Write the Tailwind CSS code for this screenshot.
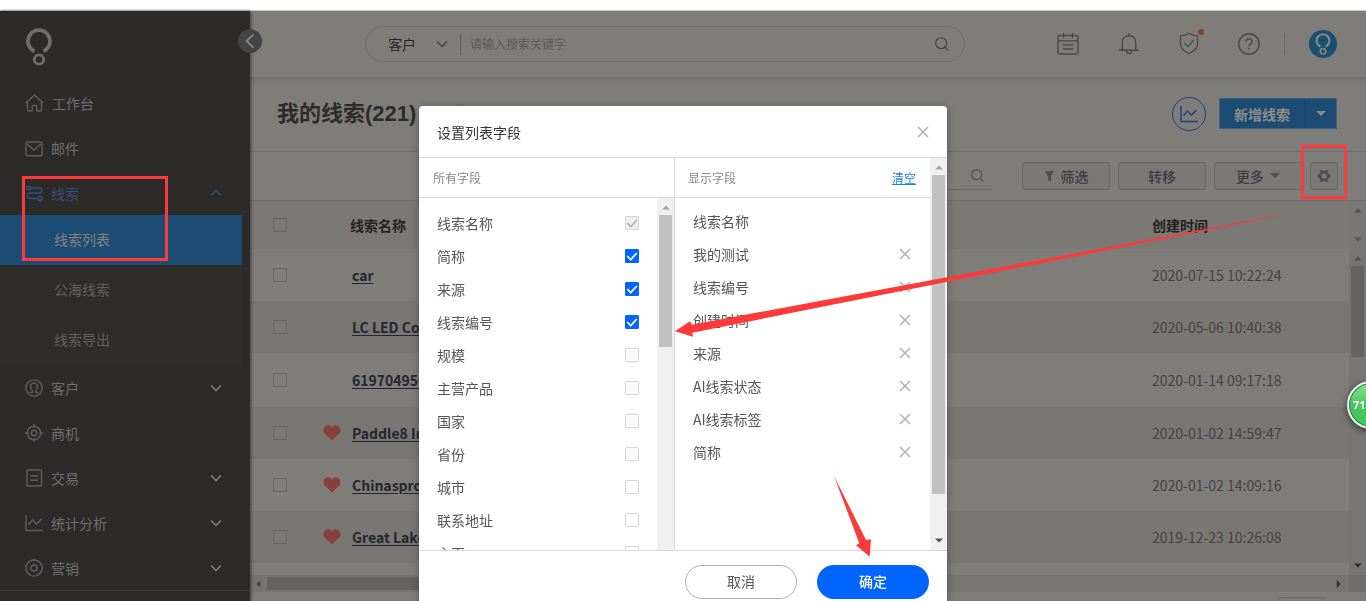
<!DOCTYPE html>
<html lang="zh-CN">
<head>
    <meta charset="UTF-8">
    <meta name="viewport" content="width=device-width, initial-scale=1.0">
    <title>我的线索</title>
    <script src="https://cdn.jsdelivr.net/npm/@tailwindcss/browser@4"></script>
    <style>
        body {
            font-family: 'Noto Sans CJK SC', sans-serif;
        }
    </style>
</head>
<body class="bg-[#7f7d7a] text-sm">

    <!-- Shared icons -->
    <svg class="hidden">
        <symbol id="chevron" viewBox="0 0 12 12"><path d="M1 3.500 6 8.500l5-5" fill="none" stroke="currentColor" stroke-width="1.500"/></symbol>
        <symbol id="caret" viewBox="0 0 10 6"><path d="M0 0h10L5 5z" fill="currentColor"/></symbol>
        <symbol id="search" viewBox="0 0 16 16"><g fill="none" stroke="currentColor" stroke-width="1.500"><circle cx="7" cy="7" r="6.200"/><path d="m11.500 11.500 4 4"/></g></symbol>
        <symbol id="close" viewBox="0 0 12 12"><path d="m1 1 10 10M11 1 1 11" fill="none" stroke="currentColor" stroke-width="1.600"/></symbol>
        <symbol id="heart" viewBox="0 0 18 16"><path d="M9 15.500 1.800 8.600C-.2 6.500.2 2.900 2.400 1.300 4.600-.3 7.500.2 9 2.500c1.500-2.300 4.400-2.800 6.600-1.200 2.200 1.600 2.600 5.200.6 7.300z" fill="currentColor"/></symbol>
        <symbol id="chart" viewBox="0 0 18 18"><g fill="none" stroke="currentColor" stroke-width="1.400"><path d="M1 1v15.500h17"/><path d="m3.500 10.500 4-4.500 4 4L16.500 5"/></g></symbol>
        <symbol id="logo" viewBox="0 0 26 38"><g fill="none" stroke="currentColor"><path d="M8.500 23.200A11 11 0 1 1 17.500 23.200" stroke-width="3.800"/><circle cx="13" cy="31.500" r="4.700" stroke-width="2.800"/></g></symbol>
    </svg>

    <div class="h-screen flex flex-col overflow-hidden">
        <div class="h-[11px] shrink-0 bg-white border-b border-[#c9cbcb]"></div>

        <div class="flex flex-1 min-h-0">
            <!-- Sidebar -->
            <aside class="relative w-[250px] shrink-0 bg-[#2d2b29] text-[#706e6c] shadow-[1px_0_3px_rgba(0,0,0,0.5)] z-10">
                <div class="h-[69px] pl-[26px] pt-[17px]">
                    <svg class="w-[26px] h-[38px] text-[#706e6c]"><use href="#logo"/></svg>
                </div>
                <button aria-label="收起" class="absolute top-[18px] -right-3 size-6 rounded-full bg-[#424543] text-[#85837f] flex items-center justify-center">
                    <svg class="size-4 rotate-90"><use href="#chevron"/></svg>
                </button>
                <nav>
                    <a href="#" class="flex items-center gap-2 h-[45px] pl-[25px]">
                        <svg class="size-[19px] text-[#5d5e61]" viewBox="0 0 19 19" fill="none" stroke="currentColor" stroke-width="1.400"><path d="M.8 10 9.500 2.200 18.200 10"/><path d="M2.500 8.800v8q0 1.200 1.200 1.200h3.400v-3.300a2.400 2.400 0 0 1 4.800 0V18h3.400q1.200 0 1.200-1.200v-8"/></svg>
                        工作台
                    </a>
                    <a href="#" class="flex items-center gap-2 h-[45px] pl-[25px]">
                        <svg class="size-[18px] text-[#5d5e61]" viewBox="0 0 18 18" fill="none" stroke="currentColor" stroke-width="1.400"><rect x=".9" y="3" width="16.200" height="13.800" rx="1.800"/><path d="m2 5 7 6 7-6"/></svg>
                        邮件
                    </a>
                    <a href="#" class="flex items-center gap-2 h-[45px] pl-[26px] pr-7 text-[#32507f]">
                        <svg class="size-[17px]" viewBox="0 0 17 17" fill="none" stroke="currentColor" stroke-width="1.500"><circle cx="2.700" cy="4" r="1.900"/><path d="M4.800 4h8.400a2.500 2.500 0 0 1 0 5H4a2.700 2.700 0 0 0 0 5.400h7.700"/><circle cx="14" cy="14.400" r="2"/></svg>
                        线索
                        <svg class="size-3 ml-auto rotate-180"><use href="#chevron"/></svg>
                    </a>
                    <div class="mr-2 bg-[#2f2d2b]">
                        <a href="#" class="flex items-center h-[50px] pl-[54px] pb-0.5 bg-[#1c4c74] text-[#85837f]">线索列表</a>
                        <a href="#" class="flex items-center h-[50px] pl-[54px] pb-0.5 text-[#62605e]">公海线索</a>
                        <a href="#" class="flex items-center h-[50px] pl-[54px] pb-0.5 text-[#62605e]">线索导出</a>
                    </div>
                    <a href="#" class="flex items-center gap-2 h-[45px] pl-[25px] pr-7">
                        <svg class="size-[18px] text-[#5d5e61]" viewBox="0 0 18 18" fill="none" stroke="currentColor" stroke-width="1.400"><circle cx="9" cy="9" r="8.100"/><path d="M4.300 13.500h3v-1.800C5.900 10.800 5.600 9.200 5.600 7.600 5.600 5.500 7 4.100 9 4.100s3.400 1.400 3.400 3.500c0 1.600-.3 3.200-1.700 4.100v1.800h3"/></svg>
                        客户
                        <svg class="size-3 ml-auto text-[#85837f]"><use href="#chevron"/></svg>
                    </a>
                    <a href="#" class="flex items-center gap-2 h-[45px] pl-[25px]">
                        <svg class="size-[18px] text-[#5d5e61]" viewBox="0 0 18 18" fill="none" stroke="currentColor" stroke-width="1.400"><circle cx="9" cy="9" r="6.700"/><circle cx="9" cy="9" r="2.700"/><path d="M9 0v3.500M9 14.500V18M0 9h3.500M14.500 9H18"/></svg>
                        商机
                    </a>
                    <a href="#" class="flex items-center gap-2 h-[45px] pl-[25px] pr-7">
                        <svg class="size-[18px] text-[#5d5e61]" viewBox="0 0 18 18" fill="none" stroke="currentColor" stroke-width="1.400"><rect x="2" y="1" width="14.500" height="16" rx=".8"/><path d="M5.500 6.700H13M5.500 11.300H13"/></svg>
                        交易
                        <svg class="size-3 ml-auto text-[#85837f]"><use href="#chevron"/></svg>
                    </a>
                    <a href="#" class="flex items-center gap-2 h-[45px] pl-[25px] pr-7">
                        <svg class="size-[18px] text-[#5d5e61]"><use href="#chart"/></svg>
                        统计分析
                        <svg class="size-3 ml-auto text-[#85837f]"><use href="#chevron"/></svg>
                    </a>
                    <a href="#" class="flex items-center gap-2 h-[45px] pl-[25px] pr-7">
                        <svg class="size-[18px] text-[#5d5e61]" viewBox="0 0 18 18" fill="none" stroke="currentColor" stroke-width="1.500"><path d="M6.500 16.700a8.100 8.100 0 1 1 5 0M7.500 17h3"/><circle cx="9" cy="9" r="3"/></svg>
                        营销
                        <svg class="size-3 ml-auto text-[#85837f]"><use href="#chevron"/></svg>
                    </a>
                </nav>
                <div class="border-t border-[#3a3937]"></div>
            </aside>

            <div class="flex-1 min-w-0 flex flex-col">
                <!-- Header -->
                <header class="flex items-center h-[67px] shrink-0 pl-[115px] pr-[29px] border-b border-[#73716e] shadow-[0_2px_4px_rgba(0,0,0,0.1)] text-[#4a4947]">
                    <form class="flex items-center w-[600px] h-9 border border-[#706e6b] rounded-full pl-[22px] pr-[15px]">
                        <select aria-label="搜索类型" class="appearance-none w-12 text-[#272625]">
                            <option>客户</option>
                        </select>
                        <svg class="size-3"><use href="#chevron"/></svg>
                        <span class="w-px h-[21px] ml-3 mr-[9px] bg-[#5f5d5b]"></span>
                        <input type="text" aria-label="搜索" placeholder="请输入搜索关键字" class="flex-1 text-xs outline-none placeholder:text-[#5c5b59]">
                        <button type="button" aria-label="搜索"><svg class="size-[14px]"><use href="#search"/></svg></button>
                    </form>
                    <div class="ml-auto flex items-center">
                        <button aria-label="日程"><svg class="size-[22px]" viewBox="0 0 22 22" fill="none" stroke="currentColor" stroke-width="1.300"><rect x="1" y="2.500" width="20" height="18.500" rx="1.500"/><path d="M1 7.800h20M6.500 0v5M15.500 0v5M6 12h10M6 16h10"/></svg></button>
                        <button aria-label="通知" class="ml-[39px]"><svg class="size-[22px]" viewBox="0 0 22 22" fill="none" stroke="currentColor" stroke-width="1.400"><path d="M1 17.300h20M4.300 17V9.500C4.300 5.500 7 2.700 11 2.700s6.700 2.800 6.700 6.800V17M11 .5v2.200M8.300 17.500c0 3.900 5.400 3.900 5.400 0"/></svg></button>
                        <button aria-label="安全" class="relative ml-[38px]">
                            <svg class="size-[22px]" viewBox="0 0 22 22" fill="none" stroke="currentColor" stroke-width="1.300"><path d="M11 .3c2.500 1.800 5.500 2.500 8.500 2.500v8.500c0 4.300-4 7.200-8.500 9.300-4.500-2.100-8.500-5-8.500-9.300V2.800c3 0 6-.7 8.500-2.500z"/><path d="m6.200 9.700 3.900 3.700 6-6.600"/></svg>
                            <span class="absolute -top-1 -right-1 size-1.5 rounded-full bg-[#8e3e3a]"></span>
                        </button>
                        <button aria-label="帮助" class="ml-[38px]"><svg class="size-[22px]" viewBox="0 0 22 22" fill="none" stroke="currentColor" stroke-width="1.400"><circle cx="11" cy="11" r="10.200"/><path d="M8 8.800C8 4.800 14.200 5 14.200 8.700c0 2.200-3.200 2.300-3.200 4.900M11 14.800v1.700"/></svg></button>
                        <span class="w-px h-[22px] ml-6 mr-6 bg-[#6c6a67]"></span>
                        <button aria-label="账号" class="size-7 rounded-full bg-[#19506f] text-[#8a8885] flex items-center justify-center"><svg class="w-4 h-[22px]"><use href="#logo"/></svg></button>
                    </div>
                </header>

                <!-- Page title -->
                <div class="flex items-center h-[74px] shrink-0 pl-[27px] pr-[29px] pb-0.5 border-b border-[#706e6b]">
                    <h1 class="text-[22px] font-bold text-[#2e2c2b] font-['Liberation_Sans','Noto_Sans_CJK_SC',sans-serif]">我的线索(221)</h1>
                    <span class="size-4 mb-1 ml-9 rounded-full border border-[#6b6967]"></span>
                    <button aria-label="线索统计" class="ml-auto size-[34px] rounded-full border border-[#223f7e] text-[#223f7e] flex items-center justify-center"><svg class="size-[18px]"><use href="#chart"/></svg></button>
                    <div class="ml-[13px] flex h-[31px] bg-[#1c4c74] border border-[#41607a] text-[#8e8c89]">
                        <button class="w-[85px] font-bold border-r border-[#184467]">新增线索</button>
                        <button aria-label="更多新增方式" class="w-[31px] flex items-center justify-center"><svg class="w-2.5 h-1.5"><use href="#caret"/></svg></button>
                    </div>
                </div>

                <!-- Toolbar -->
                <div class="flex items-center justify-end gap-2 h-[49px] shrink-0 pr-7 border-b border-[#706e6b] text-[#3d3e41] font-medium">
                    <div class="flex items-center h-7 mr-[22px] pr-2 border-b border-[#686663]">
                        <input type="text" aria-label="搜索线索" class="w-40 outline-none">
                        <svg class="size-[13px] text-[#535250]"><use href="#search"/></svg>
                    </div>
                    <button class="w-[88px] h-7 rounded-xs border border-[#696764] bg-[#7b7976] flex items-center justify-center gap-1.5">
                        <svg class="size-[11px] text-[#505052]" viewBox="0 0 11 11"><path d="M1 0h9L7 5v6L4 9V5z" fill="currentColor"/></svg>筛选
                    </button>
                    <button class="w-[88px] h-7 rounded-xs border border-[#696764] bg-[#7b7976]">转移</button>
                    <button class="w-[88px] h-7 rounded-xs border border-[#696764] bg-[#7b7976] flex items-center justify-center gap-1.5">
                        更多<svg class="w-2.5 h-1.5 text-[#505052]"><use href="#caret"/></svg>
                    </button>
                    <button aria-label="设置列表字段" class="w-7 h-7 rounded-xs border border-[#696764] bg-[#7b7976] text-[#505052] flex items-center justify-center">
                        <svg class="size-3.5" viewBox="0 0 14 14" fill="none" stroke="currentColor" stroke-width="2.800"><circle cx="7" cy="7" r="4"/><path d="M.2 7h2.600M11.200 7h2.600M3.600 1.100l1.300 2.300M9.100 10.600l1.300 2.300M10.400 1.100 9.100 3.400M4.900 10.600l-1.300 2.300"/></svg>
                    </button>
                </div>

                <!-- Leads table -->
                <div class="flex flex-1 min-h-0">
                    <div class="flex-1 min-w-0">
                        <table class="w-full table-fixed text-left">
                            <thead>
                                <tr class="h-12 bg-[#7b7976] text-[#242322]">
                                    <th class="w-[60px] pl-[23px]"><input type="checkbox" aria-label="全选" class="block appearance-none size-3.5 border border-[#696764] rounded-[1px]"></th>
                                    <th class="w-[40px]"></th>
                                    <th class="font-bold">线索名称</th>
                                    <th class="w-[197px] font-bold">创建时间</th>
                                </tr>
                            </thead>
                            <tbody id="leads"></tbody>
                        </table>
                        <div class="h-3"></div>
                        <div class="flex items-center justify-between h-[17px] px-1.5 bg-[#777572] text-[#4b4a48]">
                            <svg class="w-2 h-1.5 -ml-0.5 rotate-90"><use href="#caret"/></svg>
                            <span class="w-1/2 h-[13px] ml-[5px] mr-auto bg-[#656361]"></span>
                            <svg class="w-2 h-1.5 -rotate-90 text-[#31302f]"><use href="#caret"/></svg>
                        </div>
                        <div class="w-12 h-7 mt-[5px] ml-auto mr-6 border border-[#6b6967] rounded-sm"></div>
                    </div>
                    <div class="w-[17px] flex flex-col items-center text-[#555351]">
                        <div class="w-full h-12 py-1.5 flex flex-col items-center justify-between bg-[#7a7875]">
                            <svg class="w-2 h-1.5 rotate-180"><use href="#caret"/></svg>
                            <svg class="w-2 h-1.5"><use href="#caret"/></svg>
                        </div>
                        <div class="w-full h-[326px] py-1.5 flex flex-col items-center bg-[#777572]">
                            <svg class="w-2 h-1.5 rotate-180"><use href="#caret"/></svg>
                            <span class="w-[13px] h-[91px] mt-[5px] bg-[#656361]"></span>
                            <svg class="w-2 h-1.5 mt-auto text-[#31302f]"><use href="#caret"/></svg>
                        </div>
                        <div class="w-full h-[17px] bg-[#706e6b]"></div>
                    </div>
                </div>
            </div>
        </div>
    </div>

    <!-- Column settings dialog -->
    <div class="fixed inset-0 z-20 flex justify-center items-start pt-[106px] overflow-hidden">
        <div role="dialog" aria-label="设置列表字段" class="w-[528px] bg-white rounded shadow-[0_2px_10px_rgba(0,0,0,0.3)] text-[#555]">
            <div class="flex items-center justify-between h-[52px] px-[18px] border-b border-[#d9d9d9]">
                <h2 class="text-[#333]">设置列表字段</h2>
                <button aria-label="关闭" class="text-[#b3b3b3]"><svg class="size-3"><use href="#close"/></svg></button>
            </div>
            <div class="flex h-[393px] border-b border-[#d9d9d9]">
                <section class="flex-1 flex flex-col border-r border-[#d9d9d9]">
                    <h3 class="flex items-center h-10 shrink-0 px-3.5 border-b border-[#d9d9d9] text-xs text-[#888]">所有字段</h3>
                    <div class="flex flex-1 min-h-0">
                        <div id="allFields" class="flex-1 overflow-hidden pt-2 px-[18px]"></div>
                        <div class="w-[17px] flex flex-col items-center py-1.5 bg-[#f0f0f0] text-[#a3a3a3]">
                            <svg class="w-2 h-1.5 rotate-180"><use href="#caret"/></svg>
                            <span class="w-[13px] h-[132px] mt-[5px] bg-[#c1c1c1]"></span>
                        </div>
                    </div>
                </section>
                <section class="flex-1">
                    <div class="flex items-center justify-between h-10 pl-[13px] pr-3.5 border-b border-[#d9d9d9] text-xs">
                        <h3 class="text-[#888]">显示字段</h3>
                        <a href="#" class="underline text-[#1483e8]">清空</a>
                    </div>
                    <ul id="shownFields" class="pt-1.5 px-[18px]"></ul>
                </section>
                <div class="w-[17px] flex flex-col items-center py-1.5 bg-[#f0f0f0] text-[#a3a3a3]">
                    <svg class="w-2 h-1.5 rotate-180"><use href="#caret"/></svg>
                    <span class="w-[13px] h-[319px] mt-[5px] bg-[#c1c1c1]"></span>
                    <svg class="w-2 h-1.5 mt-auto text-[#505050]"><use href="#caret"/></svg>
                </div>
            </div>
            <div class="flex justify-end gap-5 px-[18px] pt-3.5 pb-4">
                <button class="w-28 h-[34px] pb-0.5 rounded-full border border-[#b0b0b0]">取消</button>
                <button class="w-28 h-[34px] pb-0.5 rounded-full bg-[#0064ff] text-white font-medium">确定</button>
            </div>
        </div>
    </div>

    <!-- Floating score -->
    <div class="fixed z-30 top-[381px] -right-[29px] size-12 rounded-full border-2 border-[#eee] bg-linear-to-b from-[#8be08c] via-[#45c65a] to-[#43c85d] shadow-[0_2px_6px_rgba(0,0,0,0.6),inset_0_0_0_1px_#1d7a55] pl-1 flex items-center text-[11px] font-bold text-white font-['Noto_Sans',sans-serif]">71</div>

    <!-- Guide marks -->
    <svg class="fixed z-40 top-0 left-0 pointer-events-none" width="1366" height="601" fill="#fd3a39">
        <rect x="23.500" y="177.500" width="143" height="82" fill="none" stroke="#fd3a39" stroke-width="3"/>
        <rect x="1302.500" y="146.500" width="43" height="51" fill="none" stroke="#fd3a39" stroke-width="3"/>
        <path d="M675 331.300 690 321.300 692 324.700 1281 214.900 1281 215.500 692.300 332.700 693 336.700z"/>
        <path d="M869.700 556.700 871 539.300 866 540 834 476 859.300 543.300 856 545.300z"/>
    </svg>

    <script>
        const leads = [
            { name: "car", time: "2020-07-15 10:22:24", liked: false },
            { name: "LC LED Corporation", time: "2020-05-06 10:40:38", liked: false },
            { name: "619704956", time: "2020-01-14 09:17:18", liked: false },
            { name: "Paddle8 Inc", time: "2020-01-02 14:59:47", liked: true },
            { name: "Chinasprout", time: "2020-01-02 14:09:16", liked: true },
            { name: "Great Lakes", time: "2019-12-23 10:26:08", liked: true },
        ];
        const allFields = ["线索名称", "简称", "来源", "线索编号", "规模", "主营产品", "国家", "省份", "城市", "联系地址", "主页"];
        const shownFields = ["线索名称", "我的测试", "线索编号", "创建时间", "来源", "AI线索状态", "AI线索标签", "简称"];

        document.getElementById("leads").innerHTML = leads.map((lead, i) => `
            <tr class="${i === 2 ? 'h-[54px]' : 'h-[52px]'} even:bg-[#797774]">
                <td class="pl-[23px]"><input type="checkbox" aria-label="${lead.name}" class="block appearance-none size-3.5 border border-[#696764] rounded-[1px]"></td>
                <td class="pl-[13px]">${lead.liked ? '<svg class="w-[18px] h-4 text-[#893f3c]"><use href="#heart"/></svg>' : ''}</td>
                <td class="pl-0.5"><a href="#" class="font-bold underline underline-offset-2 text-[#25272e]">${lead.name}</a></td>
                <td class="text-[#434345]">${lead.time}</td>
            </tr>
        `).join('');

        // The first field is always shown, the next three are switched on
        document.getElementById("allFields").innerHTML = allFields.map((field, i) => `
            <label class="flex items-center justify-between h-[33px]">
                ${field}
                <span class="relative">
                    <input type="checkbox" ${i < 4 ? 'checked' : ''} ${i === 0 ? 'disabled' : ''} class="peer block appearance-none size-3.5 rounded-[1px] border border-[#d6d6d6] checked:bg-[#0064ff] checked:border-[#0064ff] disabled:bg-[#eee] disabled:border-[#d6d6d6]">
                    <svg class="absolute inset-0 size-3.5 hidden peer-checked:block text-white peer-disabled:text-[#b5b5b5]" viewBox="0 0 14 14" fill="none" stroke="currentColor" stroke-width="1.800"><path d="m2.300 7 3.400 3.600L11.800 4"/></svg>
                </span>
            </label>
        `).join('');

        document.getElementById("shownFields").innerHTML = shownFields.map((field, i) => `
            <li class="flex items-center justify-between h-[33px]">
                ${field}
                ${i > 0 ? `<button aria-label="移除${field}" class="mr-px text-[#b3b3b3]"><svg class="size-3"><use href="#close"/></svg></button>` : ''}
            </li>
        `).join('');
    </script>
</body>
</html>
